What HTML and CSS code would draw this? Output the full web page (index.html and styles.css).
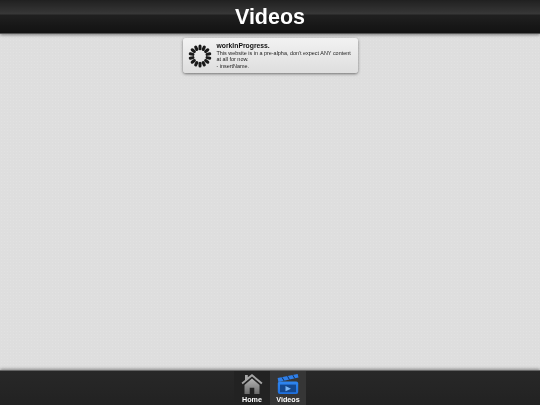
FILE: index.html
```html
<!DOCTYPE html>
<html lang="en">
<head>
<meta charset="utf-8">
<title>Videos</title>
<link rel="stylesheet" href="styles.css">
</head>
<body>
<div class="page">
  <header class="topbar"><h1>Videos</h1></header>
  <main class="content">
    <section class="notice">
      <svg class="spinner" viewBox="0 0 24 24" width="24" height="24">
        <defs><line id="petal" x1="12" y1="2" x2="12" y2="4.800"/></defs>
        <g stroke="#1a1a1a" stroke-width="3" stroke-linecap="round">
          <use href="#petal"/>
          <use href="#petal" transform="rotate(25.700 12 12)"/>
          <use href="#petal" transform="rotate(51.400 12 12)"/>
          <use href="#petal" transform="rotate(77.100 12 12)"/>
          <use href="#petal" transform="rotate(102.900 12 12)"/>
          <use href="#petal" transform="rotate(128.600 12 12)"/>
          <use href="#petal" transform="rotate(154.300 12 12)"/>
          <use href="#petal" transform="rotate(180 12 12)"/>
          <use href="#petal" transform="rotate(205.700 12 12)"/>
          <use href="#petal" transform="rotate(231.400 12 12)"/>
          <use href="#petal" transform="rotate(257.100 12 12)"/>
          <use href="#petal" transform="rotate(282.900 12 12)"/>
          <use href="#petal" transform="rotate(308.600 12 12)"/>
          <use href="#petal" transform="rotate(334.300 12 12)"/>
        </g>
      </svg>
      <div class="notice-text">
        <h2>workInProgress.</h2>
        <p>This website is in a pre-alpha, don't expect ANY content at all for now.<br>- insertName.</p>
      </div>
    </section>
  </main>
  <nav class="tabbar">
    <a class="tab">
      <svg class="tab-icon" viewBox="0 0 22 20" width="22" height="20">
        <defs>
          <linearGradient id="homeFill" x1="0" y1="0" x2="0" y2="1">
            <stop offset="0" stop-color="#b4b4b4"/>
            <stop offset="1" stop-color="#6a6a6a"/>
          </linearGradient>
        </defs>
        <path d="M4 1h2.800v2.200L11 0l10.500 8.800-1.200 1.500L11 2.500 1.700 10.300.500 8.800 4 5.900z" fill="#a6a6a6"/>
        <path d="M3.500 11 11 4.600l7.500 6.400V20h-5.200v-6.200H8.700V20H3.500z" fill="url(#homeFill)"/>
      </svg>
      <span>Home</span>
    </a>
    <a class="tab tab-active">
      <svg class="tab-icon" viewBox="0 0 22 20" width="22" height="20">
        <defs>
          <linearGradient id="clipFill" x1="0" y1="0" x2="0" y2="1">
            <stop offset="0" stop-color="#2f86f0"/>
            <stop offset="1" stop-color="#1f6fdc"/>
          </linearGradient>
        </defs>
        <path d="M.6 4 20.600 0l.9 3.400L1.400 7.900z" fill="#2f7fe8"/>
        <path d="M5 3.300 7 6.800M10.500 2.200l2 3.500M15.800 1.100l2 3.500" stroke="#12305a" stroke-width="1"/>
        <rect x=".8" y="7.500" width="20.400" height="12.500" rx="2" fill="url(#clipFill)"/>
        <rect x="3" y="10.600" width="16" height="7.600" fill="#14488f"/>
        <path d="M8.500 12.100l5.500 2.600-5.500 2.600z" fill="#79b4f5"/>
      </svg>
      <span>Videos</span>
    </a>
  </nav>
</div>
</body>
</html>
```

FILE: styles.css
```css
* { box-sizing: border-box; }
html, body { margin: 0; padding: 0; height: 100%; }
body { font-family: "Liberation Sans", Arial, sans-serif; background: #dedede; overflow: hidden; }
.page {
  width: 540px;
  height: 405px;
  display: flex;
  flex-direction: column;
  background-color: #dedede;
  background-image:
    radial-gradient(rgba(255,255,255,.12) .7px, transparent .8px),
    radial-gradient(rgba(0,0,0,.015) .7px, transparent .8px);
  background-size: 3px 3px, 5px 5px;
  background-position: 0 0, 2px 1px;
}
.topbar {
  height: 33px;
  flex: none;
  display: flex;
  align-items: center;
  justify-content: center;
  background-image:
    radial-gradient(rgba(0,0,0,.22) .6px, transparent .8px),
    linear-gradient(to bottom, #242424 0, #3e3e3e 14px, #232323 15px, #141414 33px);
  background-size: 2px 2px, auto;
  box-shadow: 0 1px 0 #555, 0 2px 3px rgba(0,0,0,.45);
  position: relative;
  z-index: 1;
}
.topbar h1 { margin: 0; color: #fff; font-size: 21.500px; font-weight: 700; line-height: 34px; filter: blur(.25px); }
.content { flex: 1; display: flex; flex-direction: column; align-items: center; padding-top: 5px; min-height: 0; }
.notice {
  width: 175px;
  height: 35px;
  display: flex;
  align-items: center;
  gap: 5px;
  padding: 0 5px;
  border-radius: 3px;
  background: linear-gradient(to bottom, #f2f2f2, #dedede);
  box-shadow: 0 1px 3px rgba(0,0,0,.5);
}
.spinner { flex: none; }
.notice-text { color: #222; min-width: 0; filter: blur(.2px); }
.notice-text h2 { margin: 0; font-size: 6.800px; line-height: 8px; font-weight: 700; color: #111; }
.notice-text p { margin: 0; font-size: 5.450px; line-height: 6.200px; }
.tabbar {
  height: 34px;
  flex: none;
  display: flex;
  justify-content: center;
  background-image:
    radial-gradient(rgba(0,0,0,.2) .6px, transparent .8px),
    linear-gradient(to bottom, #2c2c2c 0, #262626 100%);
  background-size: 2px 2px, auto;
  box-shadow: 0 -1px 0 #666, 0 -2px 3px rgba(0,0,0,.4);
}
.tab {
  width: 36px;
  display: flex;
  flex-direction: column;
  align-items: center;
  color: #fff;
  font-size: 7.200px;
  font-weight: 700;
  padding-top: 3px;
  background: #222;
}
.tab span { line-height: 8px; margin-top: 2px; filter: blur(.2px); }
.tab-icon { display: block; }
.tab-active { background: #363636; }
```
